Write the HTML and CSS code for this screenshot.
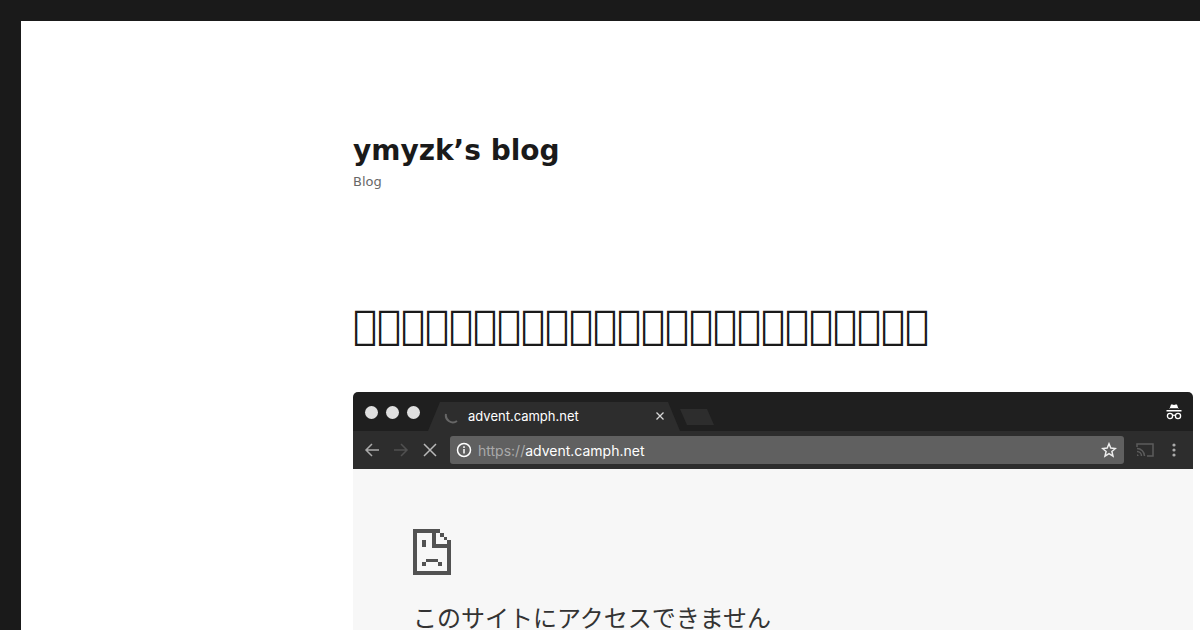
FILE: index.html
```html
<!DOCTYPE html>
<html lang="ja">
<head>
  <meta charset="UTF-8">
  <meta name="viewport" content="width=device-width, initial-scale=1.0">
  <title>ymyzk’s blog</title>
  <link rel="stylesheet" href="styles.css">
</head>
<body>
  <div class="site">
    <div class="site-inner">
      <header class="site-header">
        <h1 class="site-title"><a href="#">ymyzk’s blog</a></h1>
        <p class="site-description">Blog</p>
      </header>

      <main>
        <article>
          <h2 class="entry-title">&#xE000;&#xE000;&#xE000;&#xE000;&#xE000;&#xE000;&#xE000;&#xE000;&#xE000;&#xE000;&#xE000;&#xE000;&#xE000;&#xE000;&#xE000;&#xE000;&#xE000;&#xE000;&#xE000;&#xE000;&#xE000;&#xE000;&#xE000;&#xE000;</h2>

          <!-- Browser window -->
          <div class="browser">
            <div class="tab-bar">
              <div class="lights">
                <button aria-label="Close"></button>
                <button aria-label="Minimize"></button>
                <button aria-label="Zoom"></button>
              </div>
              <div class="tab">
                <svg width="16" height="16" viewBox="0 0 16 16" fill="none" stroke="#666" stroke-width="2"><path d="M2 6a7 7 0 0 0 11 7"/></svg>
                <span class="tab-title">advent.camph.net</span>
                <button class="icon" aria-label="Close tab"><svg width="10" height="10" viewBox="0 0 10 10" stroke="#d8d8d8" stroke-width="1.3"><path d="M1.5 1.5l7 7M8.5 1.5l-7 7"/></svg></button>
              </div>
              <button class="new-tab" aria-label="New tab"></button>
              <svg class="incognito" width="16" height="18" viewBox="0 0 16 18">
                <path d="M5 1.5h1.5l1.5.6 1.5-.6H11L12.5 6h-9z" fill="#fff"/>
                <path d="M4 5.5h8" stroke="#222" stroke-width=".8"/>
                <path d="M.5 7h15v1.5H.5z" fill="#fff"/>
                <g fill="none" stroke="#fff" stroke-width="1.3"><circle cx="4" cy="13" r="2.6"/><circle cx="12" cy="13" r="2.6"/><path d="M6.6 12.5q1.4-.8 2.8 0"/></g>
              </svg>
            </div>

            <div class="toolbar">
              <div class="nav">
                <button class="icon" aria-label="Back"><svg width="16" height="16" viewBox="0 0 16 16" fill="none" stroke="#aaa" stroke-width="1.5"><path d="M15 8H2M8 2L2 8l6 6"/></svg></button>
                <button class="icon" aria-label="Forward"><svg width="16" height="16" viewBox="0 0 16 16" fill="none" stroke="#505050" stroke-width="1.5"><path d="M1 8h13M8 2l6 6-6 6"/></svg></button>
                <button class="icon" aria-label="Stop"><svg width="16" height="16" viewBox="0 0 16 16" fill="none" stroke="#b8b8b8" stroke-width="1.5"><path d="M2 2l12 12M14 2L2 14"/></svg></button>
              </div>
              <div class="address">
                <svg width="16" height="16" viewBox="0 0 16 16" fill="none" stroke="#fff" stroke-width="1.5"><circle cx="8" cy="8" r="6.5"/><path d="M8 7v4.5M8 4.3v1.7"/></svg>
                <span class="url"><span class="scheme">https://</span>advent.camph.net</span>
                <button class="icon" aria-label="Bookmark"><svg width="16" height="16" viewBox="0 0 16 16" fill="none" stroke="#eee" stroke-width="1.5"><path d="M8 1.8l1.800 4.300 4.600.4-3.500 3 1.100 4.600L8 11.700l-4 2.400 1.100-4.600-3.500-3 4.600-.4z"/></svg></button>
              </div>
              <button class="icon" aria-label="Cast"><svg width="18" height="16" viewBox="0 0 18 16" fill="none" stroke="#5c5c5c" stroke-width="1.5"><path d="M1 5V2h16v12h-6M1 6.5A7.5 7.5 0 0 1 8.5 14M1 9.5A4.5 4.5 0 0 1 5.5 14"/><path d="M1 12.3A1.7 1.7 0 0 1 2.7 14H1z" fill="#5c5c5c" stroke="none"/></svg></button>
              <button class="icon" aria-label="Menu"><svg width="16" height="16" viewBox="0 0 16 16" fill="#aaa"><circle cx="8" cy="3" r="1.6"/><circle cx="8" cy="8" r="1.6"/><circle cx="8" cy="13" r="1.6"/></svg></button>
            </div>

            <div class="page">
              <svg class="sad-page" width="38" height="46" viewBox="0 0 38 46" fill="#525252">
                <path d="M0 0h27v4h-4v11h11v-4h4v35H0zM4 4v38h30V19H19V4z" fill-rule="evenodd"/>
                <path d="M27 4h4v4h-4zM31 8h3v3h-3zM9 11h4v7H9zM13 30h12v3H13zM9 33h4v4H9zM25 33h4v4h-4z"/>
              </svg>
              <p class="error">このサイトにアクセスできません</p>
            </div>
          </div>
        </article>
      </main>
    </div>
  </div>
</body>
</html>
```
FILE: styles.css
```css
* {
  box-sizing: border-box;
}
body {
  margin: 0;
  padding: 21px 0 0 21px;
  background: #1a1a1a;
  color: #1a1a1a;
  font-family: "DejaVu Sans", sans-serif;
}
.site {
  min-height: 100vh;
  background: #fff;
}
.site-inner {
  max-width: 840px;
  margin: 0 7px 0 auto;
}
.site-header {
  padding: 112px 0 110px;
}
.site-title {
  margin: 0;
  font-size: 28px;
  line-height: 36px;
}
.site-title a {
  color: #1a1a1a;
  text-decoration: none;
}
.site-description {
  margin: 4px 0 0;
  color: #686868;
  font-size: 13px;
  line-height: 18px;
}
.entry-title {
  margin: 0 0 43px;
  font-size: 40px;
  font-weight: 400;
  line-height: 48px;
}

/* Browser window */
.browser {
  overflow: hidden;
  border-radius: 5px;
  background: #f7f7f7;
  font-family: Inter, "Noto Sans CJK JP", sans-serif;
}
button {
  padding: 0;
  border: 0;
  background: none;
  cursor: pointer;
}
.icon {
  display: flex;
}
svg {
  display: block;
  flex-shrink: 0;
}
.tab-bar {
  display: flex;
  align-items: flex-end;
  height: 39px;
  padding: 0 11px 0 12px;
  background: #1f1f1f;
}
.lights {
  display: flex;
  gap: 8px;
  margin-right: 8px;
  padding-bottom: 12px;
}
.lights button {
  width: 13px;
  height: 13px;
  border-radius: 50%;
  background: #e0e0e0;
}
.tab {
  display: flex;
  align-items: center;
  width: 252px;
  height: 29px;
  padding: 0 15px 2px 16px;
  background: #2d2d2d;
  clip-path: polygon(12px 0, 240px 0, 100% 100%, 0 100%);
}
.tab-title {
  flex: 1;
  margin-left: 8px;
  color: #fff;
  font-size: 13px;
}
.new-tab {
  width: 34px;
  height: 16px;
  margin-bottom: 6px;
  background: #2d2d2d;
  clip-path: polygon(0 0, 27px 0, 100% 100%, 7px 100%);
}
.incognito {
  margin: 0 0 10px auto;
}
.toolbar {
  display: flex;
  align-items: center;
  gap: 12px;
  height: 38px;
  padding: 0 11px;
  background: #2d2d2d;
}
.nav {
  display: flex;
  gap: 13px;
}
.address {
  display: flex;
  flex: 1;
  align-items: center;
  height: 28px;
  padding: 0 7px 0 6px;
  border-radius: 3px;
  background: #606060;
}
.url {
  flex: 1;
  margin-left: 6px;
  color: #fff;
  font-size: 14px;
}
.scheme {
  color: #aaa;
}
.page {
  padding: 60px;
}
.error {
  margin: 24px 0 0;
  color: #333;
  font-size: 24px;
  line-height: 40px;
}
```
